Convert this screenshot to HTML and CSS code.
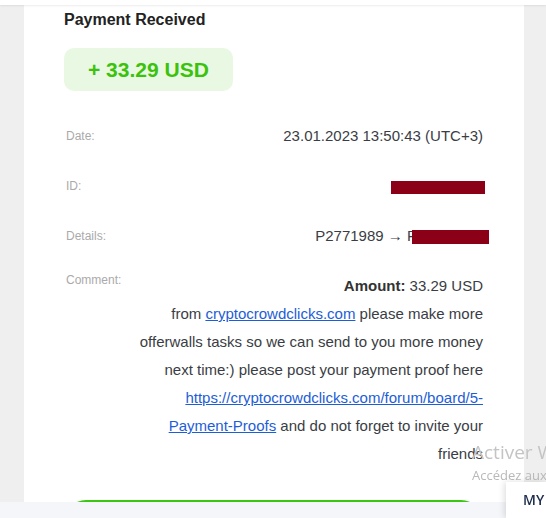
FILE: index.html
```html
<!DOCTYPE html>
<html>
	<head>
		<meta charset="UTF-8">
		<title>Payment Received</title>
		<link rel="stylesheet" href="styles.css">
	</head>
	<body>
		<div class="topbar"></div>
		<div class="card">
			<h2 class="title">Payment Received</h2>
			<div class="amount">+ 33.29 USD</div>
			<div class="info">
				<div class="row">
					<div class="label">Date:</div>
					<div class="value">23.01.2023 13:50:43 (UTC+3)</div>
				</div>
				<div class="row">
					<div class="label">ID:</div>
					<div class="value"><span class="redact redact-id"></span></div>
				</div>
				<div class="row">
					<div class="label">Details:</div>
					<div class="value">P2771989 → P<span class="redact redact-details"></span></div>
				</div>
				<div class="row comment">
					<div class="label">Comment:</div>
					<div class="value">
						<b>Amount:</b> 33.29 USD<br>
						from <a href="#">cryptocrowdclicks.com</a> please make more offerwalls tasks so we can send to you more money next time:) please post your payment proof here <a href="#">https://cryptocrowdclicks.com/forum/board/5-Payment-Proofs</a> and do not forget to invite your friends
					</div>
				</div>
			</div>
			<button class="btn" type="button">OK</button>
		</div>

		<div class="watermark">
			<p class="wm-big">Activer Windows</p>
			<p class="wm-small">Accédez aux paramètres pour activer Windows.</p>
		</div>
		<div class="bottom-bar"></div>
		<div class="my-tab">MY ACCOUNT</div>
	</body>
</html>
```

FILE: styles.css
```css
body{
	margin: 0;
	background: #efefef;
	font-family: "Liberation Sans", Arial, sans-serif;
	color: #333;
	overflow: hidden;
}
.topbar{
	position: relative;
	z-index: 2;
	height: 5px;
	background: #fff;
	box-shadow: 0 1px 2px rgba(0,0,0,.08);
}
.card{
	width: 500px;
	margin-left: 24px;
	box-sizing: border-box;
	padding: 5px 41px 0 40px;
	background: #fff;
	height: 600px;
}
.title{
	margin: 0;
	font-size: 16px;
	line-height: 20px;
	font-weight: bold;
	color: #222;
}
.amount{
	display: inline-block;
	margin-top: 18px;
	padding: 11px 24px;
	font-size: 21px;
	line-height: 21px;
	font-weight: bold;
	color: #3bc20c;
	background: #e9f8e3;
	border-radius: 10px;
}
.info{
	display: flex;
	flex-direction: column;
	gap: 30px;
	margin-top: 35px;
}
.row{
	display: grid;
	grid-template-columns: 1fr 346px;
	align-items: start;
	line-height: 20px;
}
.label{
	padding-left: 2px;
	font-size: 12px;
	color: #aaa;
}
.value{
	text-align: right;
	font-size: 15px;
	color: #3a3d44;
}
.redact{
	display: inline-block;
	vertical-align: middle;
	background: #8b0016;
}
.redact-id{
	width: 94px;
	height: 13px;
	margin-right: -2px;
}
.redact-details{
	width: 77px;
	height: 14px;
	margin-left: -5px;
	margin-right: -6px;
}
.row.comment{
	margin-top: -6px;
}
.row.comment .value{
	padding-top: 2px;
	line-height: 28px;
}
.value b{
	color: #333;
}
.value a{
	color: #1d5ed6;
}
.btn{
	display: block;
	width: 100%;
	height: 44px;
	margin-top: 32px;
	border: 0;
	border-radius: 22px;
	background: #3ac70f;
	color: #fff;
	font-size: 16px;
}
.watermark{
	position: fixed;
	left: 472px;
	top: 440px;
	white-space: nowrap;
	font-family: "Open Sans", sans-serif;
	color: #c4c4c4;
}
.watermark p{
	margin: 0;
}
.wm-big{
	font-size: 19px;
	line-height: 24px;
}
.wm-small{
	margin-top: 2px !important;
	font-size: 13px;
	line-height: 18px;
	color: #b9b9b9;
}
.bottom-bar{
	position: fixed;
	left: 0;
	right: 0;
	bottom: 0;
	height: 16px;
	background: #f5f6fa;
}
.my-tab{
	position: fixed;
	right: 0;
	bottom: 0;
	width: 40px;
	height: 36px;
	box-sizing: border-box;
	padding-left: 17px;
	overflow: hidden;
	white-space: nowrap;
	line-height: 36px;
	font-family: "Open Sans", sans-serif;
	font-size: 14px;
	font-weight: 600;
	color: #1c2b4b;
	background: #fff;
	box-shadow: -2px 0 6px rgba(0,0,0,.12);
}
```
